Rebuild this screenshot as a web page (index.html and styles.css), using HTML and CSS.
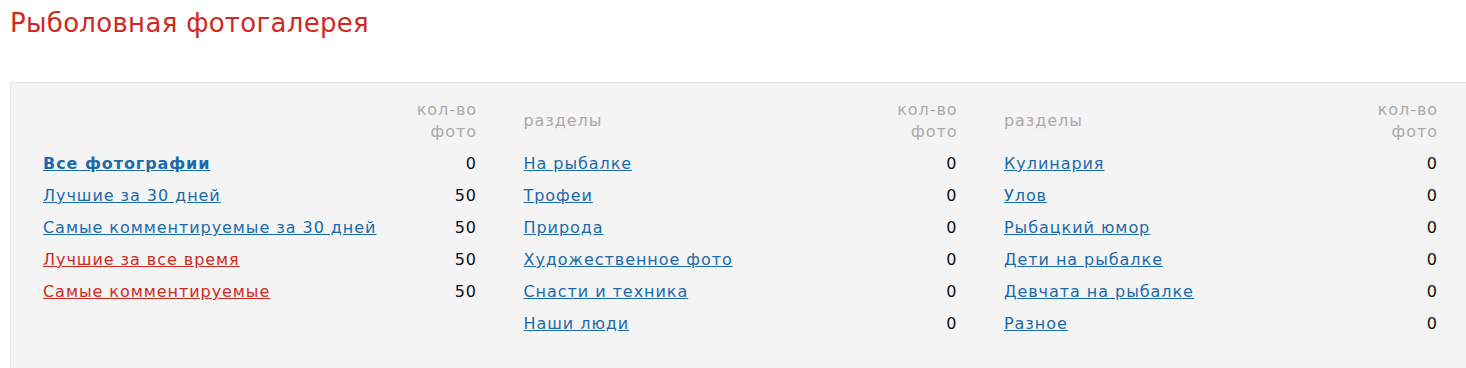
FILE: index.html
```html
<!DOCTYPE html>
<html lang="ru">
<head>
  <meta charset="UTF-8" />
  <title>Рыболовная фотогалерея</title>
  <link rel="stylesheet" href="styles.css">
</head>
<body>

<div class="page">
  <h1>Рыболовная фотогалерея</h1>

  <div class="gallery-box">
    <table class="cat-table">
      <tr>
        <th class="name"></th>
        <th class="count">кол-во<br>фото</th>
      </tr>
      <tr><td><a href="#" class="main">Все фотографии</a></td><td class="count">0</td></tr>
      <tr><td><a href="#">Лучшие за 30 дней</a></td><td class="count">50</td></tr>
      <tr><td><a href="#">Самые комментируемые за 30 дней</a></td><td class="count">50</td></tr>
      <tr><td><a href="#" class="red">Лучшие за все время</a></td><td class="count">50</td></tr>
      <tr><td><a href="#" class="red">Самые комментируемые</a></td><td class="count">50</td></tr>
    </table>

    <table class="cat-table">
      <tr>
        <th class="name">разделы</th>
        <th class="count">кол-во<br>фото</th>
      </tr>
      <tr><td><a href="#">На рыбалке</a></td><td class="count">0</td></tr>
      <tr><td><a href="#">Трофеи</a></td><td class="count">0</td></tr>
      <tr><td><a href="#">Природа</a></td><td class="count">0</td></tr>
      <tr><td><a href="#">Художественное фото</a></td><td class="count">0</td></tr>
      <tr><td><a href="#">Снасти и техника</a></td><td class="count">0</td></tr>
      <tr><td><a href="#">Наши люди</a></td><td class="count">0</td></tr>
    </table>

    <table class="cat-table">
      <tr>
        <th class="name">разделы</th>
        <th class="count">кол-во<br>фото</th>
      </tr>
      <tr><td><a href="#">Кулинария</a></td><td class="count">0</td></tr>
      <tr><td><a href="#">Улов</a></td><td class="count">0</td></tr>
      <tr><td><a href="#">Рыбацкий юмор</a></td><td class="count">0</td></tr>
      <tr><td><a href="#">Дети на рыбалке</a></td><td class="count">0</td></tr>
      <tr><td><a href="#">Девчата на рыбалке</a></td><td class="count">0</td></tr>
      <tr><td><a href="#">Разное</a></td><td class="count">0</td></tr>
    </table>
  </div>
</div>

</body>
</html>
```

FILE: styles.css
```css
body {
  margin: 0;
  font-family: "DejaVu Sans", Verdana, sans-serif;
  font-size: 16px;
  line-height: 22px;
  letter-spacing: 0.95px;
  color: #111;
  background: #fff;
}
.page {
  padding: 0 0 0 10px;
}
h1 {
  margin: 0;
  padding: 6px 0 0 0;
  height: 76px;
  font-size: 26px;
  line-height: 34px;
  font-weight: normal;
  letter-spacing: 0.3px;
  color: #cc2b22;
}
.gallery-box {
  display: flex;
  align-items: flex-start;
  gap: 46.5px;
  background: #f4f4f4;
  border: 1px solid #e9e9e9;
  border-right: none;
  padding: 11px 0 30px 32px;
}
.cat-table {
  width: 434px;
  border-collapse: collapse;
}
.cat-table th,
.cat-table td {
  padding: 5px 0;
  vertical-align: middle;
}
.cat-table th {
  font-weight: normal;
  color: #ababab;
  text-align: left;
}
.cat-table th.count {
  width: 70px;
  white-space: nowrap;
  text-align: right;
}
.cat-table td.count {
  text-align: right;
}
.cat-table a {
  color: #1b6aab;
  text-decoration: underline;
}
.cat-table a.main {
  font-weight: bold;
}
.cat-table a.red {
  color: #cc2b22;
}
```
